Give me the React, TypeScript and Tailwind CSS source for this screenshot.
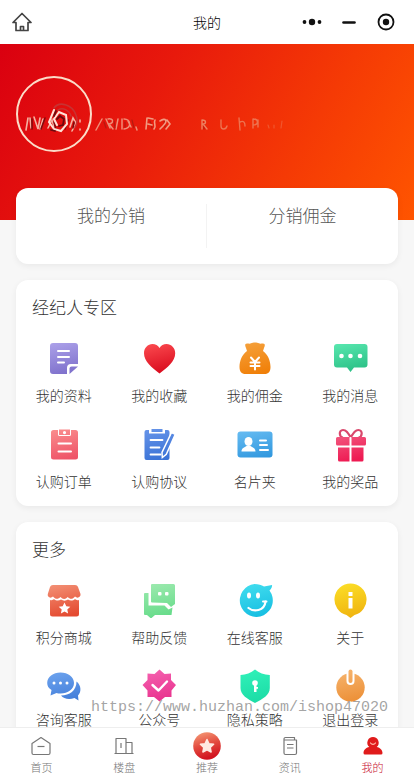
import type { ReactNode } from 'react';

type GlyphProps = {
  id: string;
  from: string;
  to: string;
  children: ReactNode;
};

function Glyph({ id, from, to, children }: GlyphProps) {
  return (
    <svg viewBox="0 0 36 36" className="h-9 w-9" fill={`url(#${id})`} aria-hidden="true">
      <defs>
        <linearGradient id={id} gradientUnits="userSpaceOnUse" x1="14" y1="2" x2="22" y2="34">
          <stop offset="0" stopColor={from} />
          <stop offset="1" stopColor={to} />
        </linearGradient>
      </defs>
      {children}
    </svg>
  );
}

const white = { fill: 'none', stroke: '#fff', strokeLinecap: 'round', strokeLinejoin: 'round' } as const;

const profileIcon = (
  <Glyph id="profile" from="#aa9fe8" to="#7e70cb">
    <path d="M7 3h22a3 3 0 0 1 3 3v18h-7a4 4 0 0 0-4 4v6H7a3 3 0 0 1-3-3V6a3 3 0 0 1 3-3z" />
    <path d="M23.500 34v-5.500a2 2 0 0 1 2-2H32z" />
    <path {...white} strokeWidth="2" d="M12 11h11M12 17h11M12 22.500h6" />
  </Glyph>
);

const heartIcon = (
  <Glyph id="heart" from="#fb4a4f" to="#d8091c">
    <path d="M18.500 33.500C11 27.500 3 21.500 3 13.200 3 8 6.800 4 11.500 4c3 0 5.500 1.400 7 4 1.500-2.600 4-4 7-4 4.800 0 8.700 4 8.700 9.200 0 8.300-8 14.300-15.700 20.300z" />
  </Glyph>
);

const moneyIcon = (
  <Glyph id="money" from="#f5a03a" to="#f07f08">
    <path d="M10 3.500c2 0 3 .500 4-.3 2-1 6-1 8 0 1 .8 2 .3 4 .3 2.500 0 2 2.500 1 4.500l-1 3c5 3.500 7.500 10 7.500 16 0 4.500-2 7-6 7h-19c-4 0-6-2.500-6-7 0-6 2.500-12.500 7.500-16l-1-3c-1-2-1.500-4.500 1-4.500z" />
    <path {...white} strokeWidth="2" d="M14 17.500l4 4.500 4-4.500M13.500 22.500h9M13.500 26h9M18 22v7.500" />
  </Glyph>
);

const messageIcon = (
  <Glyph id="message" from="#57e6ae" to="#28bd83">
    <path d="M5 4h27.500a3 3 0 0 1 3 3v17.500a3 3 0 0 1-3 3H22L18.500 32 15 27.500H5a3 3 0 0 1-3-3V7a3 3 0 0 1 3-3z" />
    <g fill="#fff">
      <circle cx="9.500" cy="16" r="2.300" />
      <circle cx="18.500" cy="16" r="2.300" />
      <circle cx="28" cy="16" r="2.300" />
    </g>
  </Glyph>
);

const orderIcon = (
  <Glyph id="order" from="#fa8d8d" to="#ee5267">
    <path d="M7.500 4H12v4.500a1.500 1.500 0 0 0 1.500 1.500h10A1.500 1.500 0 0 0 25 8.500V4h4.500A2.500 2.500 0 0 1 32 6.500V31a2.500 2.500 0 0 1-2.500 2.500h-22A2.500 2.500 0 0 1 5 31V6.500A2.500 2.500 0 0 1 7.500 4z" />
    <path fillRule="evenodd" d="M13 3.500h11v5.500H13zM18.500 5a1.600 1.600 0 1 0 0 3.200 1.600 1.600 0 0 0 0-3.200z" />
    <path {...white} strokeWidth="2" d="M12.500 17.500h12.500M12.500 25.500h12.500" />
  </Glyph>
);

const agreementIcon = (
  <Glyph id="agreement" from="#6593e8" to="#3972d6">
    <path d="M5.500 4H8v3.500h16V4h2.500a2 2 0 0 1 2 2v26a2 2 0 0 1-2 2h-21a2 2 0 0 1-2-2V6a2 2 0 0 1 2-2z" />
    <path d="M10.500 3h11v3h-11z" />
    <path {...white} strokeWidth="1.800" d="M9.500 14h12M9.500 21.500h9M9.500 28.500h10" />
    <path stroke="#fff" strokeWidth="1.500" d="M30.500 6.500l3.800 1.800-9 20-4 3.200-.3-5z" />
  </Glyph>
);

const cardIcon = (
  <Glyph id="namecard" from="#67bcf2" to="#3097de">
    <rect x="0.500" y="5.500" width="35" height="26" rx="3" />
    <g fill="#fff">
      <ellipse cx="11.500" cy="15.500" rx="4" ry="4.500" />
      <path d="M4.500 25.500c0-3.500 3-4 5-5.500h4c2 1.500 5 2 5 5.500z" />
    </g>
    <path {...white} strokeWidth="2" d="M23 14.500h6M23 19h7M23 24h8" />
  </Glyph>
);

const giftIcon = (
  <Glyph id="gift" from="#f36387" to="#ee1a52">
    <path fill="none" stroke="#d9486c" strokeWidth="2.200" d="M18.500 11C16 7 14.500 4 11 4c-4.500 0-4 7 0 7.500M19 11c2.500-4 4-7 7.500-7 4.500 0 4 7 0 7.500" />
    <path d="M5.500 11h12v8.500h-12A1.500 1.500 0 0 1 4 18v-5.500A1.500 1.500 0 0 1 5.500 11zM19.500 11h13a1.500 1.500 0 0 1 1.500 1.500V18a1.500 1.500 0 0 1-1.500 1.500h-13zM6 21.500h11.500v14h-10A1.500 1.500 0 0 1 6 34zM19.500 21.500h12V34a1.500 1.500 0 0 1-1.500 1.500H19.500z" />
  </Glyph>
);

const shopIcon = (
  <Glyph id="shop" from="#f28d72" to="#e44a30">
    <path d="M7 3h22c1.500 0 2.500.7 3 2l2.500 7c.5 3-3 5-5.500 2.500-2.500 3-5 3-7.300.5-2.200 2.500-5 2.500-7.200 0-2.500 2.500-5 2.500-7.500-.5C4.500 17 1 15 1.800 12L4 5c.5-1.300 1.500-2 3-2z" />
    <path d="M4 18c2 .5 3 0 4-1 2 2 5 2 7 .5 2 1.500 5 1.500 7 0 2 1.500 5 1.500 7-.5 1 1 2 1.500 4 1v14a2.500 2.500 0 0 1-2.500 2.500h-24A2.500 2.500 0 0 1 4 32z" />
    <path fill="#fff" d="M18.500 20.500l1.800 3.700 4 .5-3 2.800.8 4-3.600-2-3.600 2 .8-4-3-2.800 4-.5z" />
  </Glyph>
);

const feedbackIcon = (
  <Glyph id="feedback" from="#9ae9ad" to="#68dc8b">
    <path d="M11 2h21.500a1.500 1.500 0 0 1 1.500 1.500V22l-4 3-4-4-15-.5a1 1 0 0 1-1-1V3a1 1 0 0 1 1-1z" />
    <path d="M4 11h3.500v12.500h16l4 4 4-2-1 7.500H14l-4 3.500L6 33H4a1 1 0 0 1-1-1V12a1 1 0 0 1 1-1z" />
    <g fill="#fff">
      <rect x="17" y="10" width="3.500" height="3.500" rx="1" />
      <rect x="24" y="10" width="3.500" height="3.500" rx="1" />
    </g>
  </Glyph>
);

const serviceIcon = (
  <Glyph id="service" from="#40dcee" to="#18bfe2">
    <path d="M17.500 2c4 0 7 1 9.500 2.500l8-1.500c.5 2.500-1.500 4.500-2.500 5.500a16.500 16.500 0 1 1-15-6.500z" />
    <g fill="#fff">
      <ellipse cx="12" cy="13.500" rx="2" ry="3" />
      <ellipse cx="21" cy="13.500" rx="2" ry="3" />
    </g>
    <path {...white} strokeWidth="2.200" d="M11.500 26c5 4 16 3.500 17-6.500" />
    <path {...white} strokeWidth="2" d="M26 19.500h3.500" />
  </Glyph>
);

const aboutIcon = (
  <Glyph id="about" from="#fbdc26" to="#f0b510">
    <path d="M18.500 1.500a16 16 0 0 1 4 31.500l-4 3-4-3a16 16 0 0 1 4-31.500z" />
    <path fill="#fff" d="M16.500 10h4v4h-4zM16.500 16h4v10.500h-4z" />
  </Glyph>
);

const consultIcon = (
  <Glyph id="consult" from="#6da3ee" to="#427dd9">
    <path d="M14.500 4.500C22 4.500 28 9 28 15s-6 10.500-13.500 10.500c-1.500 0-3 0-4-.5l-6 2.500L5.500 22C2.500 20 1.200 18 1.200 15c0-6 6-10.500 13.300-10.500z" />
    <path d="M30.500 13.500c5 4 5 10.500 1.500 14l.5 5-4-2.500c-6 2-11 .5-13.500-2.500 8.500 0 15.500-5 15.500-14z" />
    <g fill="#fff">
      <circle cx="8" cy="15" r="1.500" />
      <circle cx="14.500" cy="15" r="1.500" />
      <circle cx="21" cy="15" r="1.500" />
    </g>
  </Glyph>
);

const officialIcon = (
  <Glyph id="official" from="#f45fae" to="#e8308c">
    <path d="M18.500 1.500l5 4.500 6.500-.5v6.500l5 5-4.500 5.500V29H24l-5.500 4.500L13 29H6.500v-6.500l-5-5.500 5-5V5.500l7 .5z" />
    <path {...white} strokeWidth="2.400" d="M11.500 17l6 5.500 8.500-9" />
  </Glyph>
);

const privacyIcon = (
  <Glyph id="privacy" from="#2ff0b8" to="#1cdca6">
    <path d="M18 1.500c4 3.500 9 5 14.800 5.500v13c0 7-7 11-14.800 15C10.500 31 3.500 27 3.500 20V7C9 6.500 14 5 18 1.500z" />
    <g fill="#fff">
      <circle cx="18" cy="15" r="2.800" />
      <path d="M17 16h2.500v8H17zM19 19h2v1.800h-2z" />
    </g>
  </Glyph>
);

const logoutIcon = (
  <Glyph id="logout" from="#f6b36c" to="#ec8f36">
    <circle cx="18.500" cy="19.500" r="14.200" />
    <rect x="14.500" y="0" width="8" height="17" rx="4" fill="#fff" />
    <rect x="16.500" y="1.500" width="4" height="13.500" rx="2" />
  </Glyph>
);

type MenuItem = { label: string; icon: ReactNode };

const agentRows: MenuItem[][] = [
  [
    { label: '我的资料', icon: profileIcon },
    { label: '我的收藏', icon: heartIcon },
    { label: '我的佣金', icon: moneyIcon },
    { label: '我的消息', icon: messageIcon },
  ],
  [
    { label: '认购订单', icon: orderIcon },
    { label: '认购协议', icon: agreementIcon },
    { label: '名片夹', icon: cardIcon },
    { label: '我的奖品', icon: giftIcon },
  ],
];

const moreRows: MenuItem[][] = [
  [
    { label: '积分商城', icon: shopIcon },
    { label: '帮助反馈', icon: feedbackIcon },
    { label: '在线客服', icon: serviceIcon },
    { label: '关于', icon: aboutIcon },
  ],
  [
    { label: '咨询客服', icon: consultIcon },
    { label: '公众号', icon: officialIcon },
    { label: '隐私策略', icon: privacyIcon },
    { label: '退出登录', icon: logoutIcon },
  ],
];

function MenuRow({ items, tight }: { items: MenuItem[]; tight?: boolean }) {
  return (
    <div className="grid grid-cols-4">
      {items.map((item) => (
        <button
          key={item.label}
          type="button"
          className={`flex flex-col items-center text-sm leading-[18px] text-[#333] ${tight ? 'gap-1.5' : 'gap-2.5'}`}
        >
          {item.icon}
          <span>{item.label}</span>
        </button>
      ))}
    </div>
  );
}

function MenuCard({ title, children }: { title: string; children: ReactNode }) {
  return (
    <section className="mx-4 mt-4 rounded-xl bg-white py-4 shadow-[0_2px_6px_rgba(0,0,0,0.06)]">
      <h2 className="px-4 text-[17px] leading-[22px] text-[#333]">{title}</h2>
      <div className="mt-[22px] flex flex-col gap-[22px]">{children}</div>
    </section>
  );
}

const line = { fill: 'none', stroke: '#777', strokeWidth: 1.2, strokeLinejoin: 'round' } as const;

const tabs = [
  {
    label: '首页',
    icon: (
      <svg viewBox="0 0 20 20" className="h-5 w-5" {...line}>
        <path d="M1 7.500L10 1.500l9 6V17a1.500 1.500 0 0 1-1.500 1.500h-15A1.500 1.500 0 0 1 1 17z" />
        <path d="M6.500 10.500h7" />
      </svg>
    ),
  },
  {
    label: '楼盘',
    icon: (
      <svg viewBox="0 0 20 20" className="h-5 w-5" {...line}>
        <path d="M2 17.500v-15h10v15M12 6.500h6v11M.500 17.500h19M7 7v5" />
      </svg>
    ),
  },
  {
    label: '推荐',
    icon: (
      <svg viewBox="0 0 28 28" className="h-7 w-7">
        <defs>
          <linearGradient id="star" x1="0" y1="0" x2="0.300" y2="1">
            <stop offset="0" stopColor="#f6a27c" />
            <stop offset="0.550" stopColor="#e34a3e" />
            <stop offset="1" stopColor="#d21420" />
          </linearGradient>
        </defs>
        <circle cx="14" cy="14" r="13.800" fill="url(#star)" />
        <path
          fill="#ffe9e1"
          stroke="#ffe9e1"
          strokeWidth="1.500"
          strokeLinejoin="round"
          d="M14 7.500l2 4.200 4.600.6-3.400 3.200.9 4.500-4.100-2.200L9.900 20l.9-4.500-3.400-3.200 4.600-.6z"
        />
      </svg>
    ),
  },
  {
    label: '资讯',
    icon: (
      <svg viewBox="0 0 20 20" className="h-5 w-5" {...line}>
        <path d="M4 4V3a1.500 1.500 0 0 1 1.500-1.500h9V4M4 4h12.500v13a1.500 1.500 0 0 1-1.500 1.500H5.500A1.500 1.500 0 0 1 4 17zM7 8.500h6.500M7 12h6.500" />
      </svg>
    ),
  },
  {
    label: '我的',
    active: true,
    icon: (
      <svg viewBox="0 0 20 20" className="h-5 w-5" fill="#e01b1b">
        <path d="M10 1a5.700 5.700 0 0 1 3.700 10c3.500.8 5.800 3 5.800 6a1.500 1.500 0 0 1-1.500 1.500H2A1.500 1.500 0 0 1 .5 17c0-3 2.300-5.200 5.800-6A5.700 5.700 0 0 1 10 1z" />
        <path fill="none" stroke="#ffb9a8" strokeWidth="1.200" strokeLinecap="round" d="M7.500 7c1.300 1.800 3.700 1.800 5 0" />
      </svg>
    ),
  },
];

export default function App() {
  return (
    <div className="relative flex h-screen flex-col overflow-hidden bg-[#f7f7f7] font-['Noto_Sans_CJK_SC',sans-serif] font-light">
      <header className="grid h-11 flex-none grid-cols-3 items-center bg-white px-3">
        <button type="button" aria-label="首页" className="justify-self-start">
          <svg viewBox="0 0 20 20" className="h-5 w-5" fill="none" stroke="#444" strokeWidth="1.700" strokeLinejoin="round">
            <path d="M1 10.500L10 1.500l9 9h-3v8H4v-8zM8.500 18v-3.500h3V18" />
          </svg>
        </button>
        <h1 className="text-center text-sm text-black">我的</h1>
        <div className="flex items-center gap-[17px] justify-self-end pr-1.5">
          <button type="button" aria-label="更多">
            <svg viewBox="0 0 20 20" className="h-5 w-5" fill="#111">
              <circle cx="2.500" cy="10" r="1.900" />
              <circle cx="10" cy="10" r="3.200" />
              <circle cx="17.500" cy="10" r="1.900" />
            </svg>
          </button>
          <button type="button" aria-label="最小化">
            <svg viewBox="0 0 20 20" className="h-5 w-5">
              <path d="M4.500 10.500h11" stroke="#111" strokeWidth="2.600" strokeLinecap="round" />
            </svg>
          </button>
          <button type="button" aria-label="关闭">
            <svg viewBox="0 0 20 20" className="h-5 w-5">
              <circle cx="10" cy="10" r="7.500" fill="none" stroke="#111" strokeWidth="1.800" />
              <circle cx="10" cy="10" r="3.200" fill="#111" />
            </svg>
          </button>
        </div>
      </header>

      <main className="min-h-0 flex-1 overflow-y-auto [scrollbar-width:none]">
        <div className="h-44 bg-[linear-gradient(120deg,#da0010_0%,#e8190c_35%,#f53a05_70%,#ff5500_100%)] px-4 pt-8">
          <div className="relative h-[76px] w-[76px] rounded-full border-2 border-[#fbdcc8]">
            {/* worn lettering that runs out of the avatar and fades to the right */}
            <svg viewBox="0 0 280 40" className="absolute top-[18px] left-0 h-10 w-[280px] max-w-none" fill="none" strokeLinecap="round">
              <path stroke="#f4b0a0" strokeWidth="1.600" d="M10 22l-2 12M12 22l1 10M16 21l4 12 2-11M25 23l-3 10M30 32l4-8 2 7M52 31l3-9 3 5-4 8M62 24v2M62 33v1" />
              <path stroke="#7d0a0c" strokeWidth="1.500" d="M14 23v10M27 22l-4 11M36 26l2 8M50 24l-3 9M56 26l-1 6" />
              <path stroke="#c83232" strokeWidth="1.600" d="M36 12c5-7 18-4 22 7 2 5 1 9-1 12M40 14c5-3 11 0 13 6" />
              <path stroke="#ffe3d8" strokeWidth="2" d="M36 14l-5 12 5 7 7 2 6-7-1-9-7-3-5 7 3 6" />
              <path stroke="#6a0b10" strokeWidth="1.800" d="M36 20l2-5M39 23l3-3 4 3-1 6-4 1M33 34l4 1" />
              <path stroke="#ef8d77" strokeWidth="1.500" d="M84 23l-6 11M88 23l4 9M90 23c6-1 6 4 1 5l4 5M100 23l-2 10M104 23v10M106 23c7 0 8 9 0 10M110 25l3 6M118 31l1 3" />
              <path stroke="#b51a10" strokeWidth="1.200" d="M86 26l2 6M96 25l1 7M107 26v5M114 24l2 8M132 25l2 7M146 25l1 6M186 27v6" />
              <path stroke="#f19b82" strokeWidth="1.600" d="M129 22l-1 11M130 22l5 1M130 28l4 1M137 24c-2 4 2 5-1 9M142 25c6-4 8 0 3 5l-3 3M149 24l3 4-4 5" />
              <path stroke="#ee8161" strokeWidth="1.400" d="M184 24v9M184 24c5 0 4 4 1 4l4 5" />
              <path stroke="#ed7350" strokeWidth="1.400" d="M203 24v6c0 4 5 4 6 0M221 22l1 12M222 26c4-2 5 1 5 4M235 23v9M235 23c6 0 6 6 0 6M240 24v7" />
              <path stroke="#f0562e" strokeWidth="1.200" d="M250 29l1 3M256 29v3M264 25l-1 7" />
            </svg>
          </div>
        </div>

        <section className="relative mx-4 -mt-8 grid grid-cols-2 divide-x divide-[#f3f3f3] rounded-xl bg-white py-4 shadow-[0_2px_6px_rgba(0,0,0,0.06)]">
          <button type="button" className="flex h-11 justify-center text-[17px] leading-[22px] text-[#555]">我的分销</button>
          <button type="button" className="flex h-11 justify-center text-[17px] leading-[22px] text-[#555]">分销佣金</button>
        </section>

        <MenuCard title="经纪人专区">
          {agentRows.map((row) => (
            <MenuRow key={row[0].label} items={row} />
          ))}
        </MenuCard>

        <MenuCard title="更多">
          {moreRows.map((row, i) => (
            <MenuRow key={row[0].label} items={row} tight={i === moreRows.length - 1} />
          ))}
        </MenuCard>
      </main>

      <p className="pointer-events-none absolute right-[26px] bottom-[62px] font-['Liberation_Mono',monospace] text-[15px] leading-5 font-normal text-[#8c8c8c]/80 [text-shadow:1px_0_0_rgba(255,255,255,0.7)]">
        https://www.huzhan.com/ishop47020
      </p>

      <nav className="grid h-[53px] flex-none grid-cols-5 border-t border-[#eee] bg-white">
        {tabs.map((tab) => (
          <a
            key={tab.label}
            href="#"
            aria-current={tab.active ? 'page' : undefined}
            className={`flex flex-col items-center pt-1 text-[11px] leading-[14px] ${tab.active ? 'text-[#c8102e]' : 'text-[#777]'}`}
          >
            <span className="flex h-7 items-center">{tab.icon}</span>
            <span>{tab.label}</span>
          </a>
        ))}
      </nav>
    </div>
  );
}
